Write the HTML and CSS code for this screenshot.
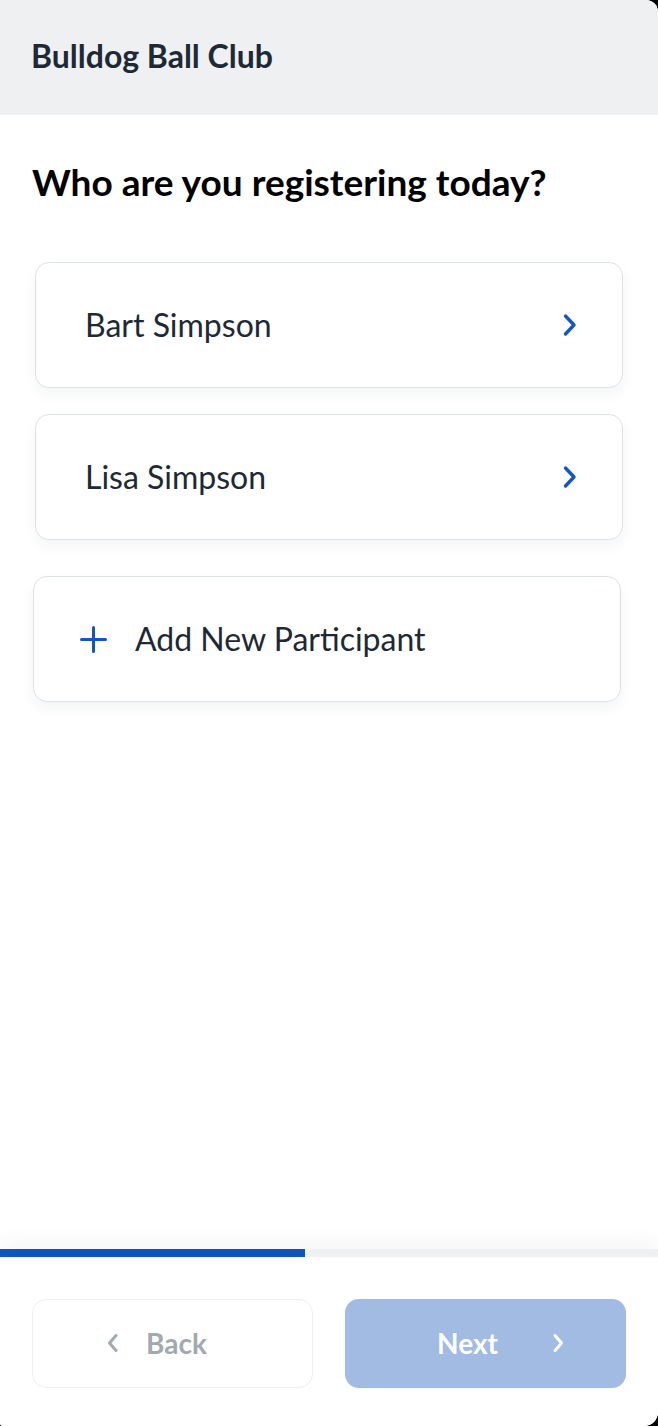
FILE: index.html
```html
<!DOCTYPE html>
<html lang="en">
<head>
<meta charset="utf-8">
<title>Bulldog Ball Club</title>
<link rel="stylesheet" href="styles.css">
</head>
<body>
<div class="app">
  <header class="header">
    <div class="club">Bulldog Ball Club</div>
  </header>
  <main class="main">
    <h1 class="question">Who are you registering today?</h1>
    <div class="list">
      <div class="card">
        <span class="name">Bart Simpson</span>
        <svg class="chev" width="16" height="24" viewBox="0 0 16 24"><path d="M3.5 3l8.5 9-8.5 9" fill="none" stroke="#1456c0" stroke-width="3.4" stroke-linecap="round" stroke-linejoin="round"/></svg>
      </div>
      <div class="card">
        <span class="name">Lisa Simpson</span>
        <svg class="chev" width="16" height="24" viewBox="0 0 16 24"><path d="M3.5 3l8.5 9-8.5 9" fill="none" stroke="#1456c0" stroke-width="3.4" stroke-linecap="round" stroke-linejoin="round"/></svg>
      </div>
      <div class="card card-add">
        <svg class="plus" width="27" height="27" viewBox="0 0 27 27"><path d="M13.5 1.5v24M1.5 13.5h24" fill="none" stroke="#1456c0" stroke-width="3" stroke-linecap="round"/></svg>
        <span class="name">Add New Participant</span>
      </div>
    </div>
  </main>
  <footer class="footer">
    <div class="progress"><div class="progress-fill" style="width:305px"></div></div>
    <div class="actions">
      <button class="btn btn-back">
        <svg width="14" height="22" viewBox="0 0 14 22"><path d="M10 3.5l-6.5 7.5 6.5 7.5" fill="none" stroke="#a3a9b0" stroke-width="3" stroke-linecap="round" stroke-linejoin="round"/></svg>
        <span>Back</span>
      </button>
      <button class="btn btn-next">
        <span>Next</span>
        <svg width="14" height="22" viewBox="0 0 14 22"><path d="M4 3.5l6.5 7.5-6.5 7.5" fill="none" stroke="#ffffff" stroke-width="3" stroke-linecap="round" stroke-linejoin="round"/></svg>
      </button>
    </div>
  </footer>
</div>
</body>
</html>
```

FILE: styles.css
```css
* { box-sizing: border-box; }
html, body { margin: 0; padding: 0; background: #000; }
body { font-family: Lato, "Open Sans", sans-serif; }
.app {
  width: 658px;
  height: 1426px;
  background: #fff;
  display: flex;
  flex-direction: column;
  overflow: hidden;
  border-top-right-radius: 12px;
  border-bottom-right-radius: 14px;
  border-bottom-left-radius: 3px;
}
.header {
  height: 115px;
  flex: 0 0 115px;
  background: #eef0f2;
  display: flex;
  align-items: center;
  padding-left: 31px;
  padding-bottom: 4px;
}
.club {
  font-size: 32px;
  font-weight: 700;
  color: #1d2935;
  line-height: 38px;
}
.main {
  flex: 1;
  padding: 44px 35px 0 35px;
}
.question {
  margin: 0 0 0 -3px;
  font-size: 37px;
  font-weight: 700;
  color: #000;
  line-height: 46px;
}
.list {
  margin-top: 57px;
  display: flex;
  flex-direction: column;
  gap: 26px;
}
.card {
  height: 126px;
  width: 588px;
  border: 1.5px solid #dde2e9;
  border-radius: 14px;
  background: #fff;
  box-shadow: 0 6px 14px rgba(20, 30, 50, 0.05);
  display: flex;
  align-items: center;
  padding: 0 44px 0 49px;
}
.card .name {
  flex: 1;
  font-size: 32px;
  color: #1d2935;
  line-height: 38px;
}
.card-add {
  margin-top: 10px;
  margin-left: -2px;
  padding-left: 46px;
}
.card-add .plus { margin-right: 28px; }
.footer {
  flex: 0 0 177px;
  box-shadow: 0 -8px 18px rgba(0, 0, 0, 0.04);
  position: relative;
  background: #fff;
}
.progress {
  height: 8px;
  background: #eef0f2;
}
.progress-fill {
  height: 8px;
  background: #1155bb;
}
.actions {
  display: grid;
  grid-template-columns: 1fr 1fr;
  gap: 32px;
  padding: 42px 32px 38px 32px;
}
.btn {
  height: 89px;
  border-radius: 14px;
  font-family: Lato, "Open Sans", sans-serif;
  font-size: 28px;
  font-weight: 700;
  display: flex;
  align-items: center;
  cursor: pointer;
  padding-bottom: 3px;
}
.btn-back {
  background: #fff;
  border: 1.5px solid #eceef1;
  color: #a3a9b0;
  padding-left: 73px;
  gap: 26px;
}
.btn-next {
  background: #a1bbe3;
  border: none;
  color: #fff;
  padding-left: 92px;
  gap: 53px;
}
```
